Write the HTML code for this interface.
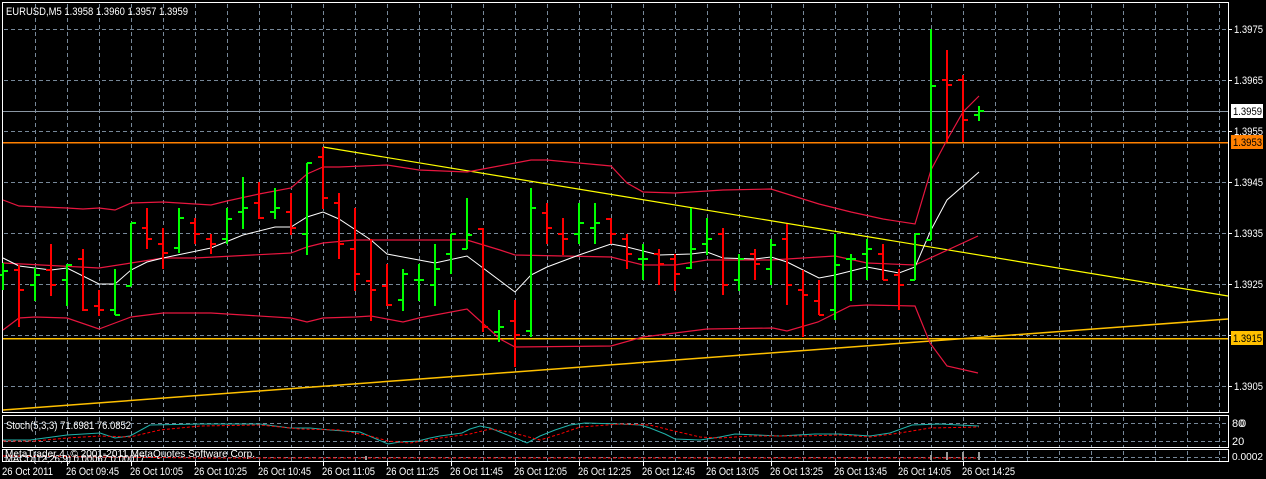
<!DOCTYPE html>
<html><head><meta charset="utf-8"><style>
html,body{margin:0;padding:0;background:#000;}
svg{display:block;font-family:"Liberation Sans",sans-serif;}
</style></head><body>
<svg width="1266" height="479" viewBox="0 0 1266 479" xmlns="http://www.w3.org/2000/svg" shape-rendering="crispEdges">
<rect width="1266" height="479" fill="#000"/>
<g stroke="#778899" stroke-width="1" stroke-dasharray="4,3">
<path d="M35.5 4V412M67.5 4V412M99.5 4V412M131.5 4V412M163.5 4V412M195.5 4V412M227.5 4V412M259.5 4V412M291.5 4V412M323.5 4V412M355.5 4V412M387.5 4V412M419.5 4V412M451.5 4V412M483.5 4V412M515.5 4V412M547.5 4V412M579.5 4V412M611.5 4V412M643.5 4V412M675.5 4V412M707.5 4V412M739.5 4V412M771.5 4V412M803.5 4V412M835.5 4V412M867.5 4V412M899.5 4V412M931.5 4V412M963.5 4V412M995.5 4V412M1027.5 4V412M1059.5 4V412M1091.5 4V412M1123.5 4V412M1155.5 4V412M1187.5 4V412M1219.5 4V412"/>
<path d="M35.5 417V447M67.5 417V447M99.5 417V447M131.5 417V447M163.5 417V447M195.5 417V447M227.5 417V447M259.5 417V447M291.5 417V447M323.5 417V447M355.5 417V447M387.5 417V447M419.5 417V447M451.5 417V447M483.5 417V447M515.5 417V447M547.5 417V447M579.5 417V447M611.5 417V447M643.5 417V447M675.5 417V447M707.5 417V447M739.5 417V447M771.5 417V447M803.5 417V447M835.5 417V447M867.5 417V447M899.5 417V447M931.5 417V447M963.5 417V447M995.5 417V447M1027.5 417V447M1059.5 417V447M1091.5 417V447M1123.5 417V447M1155.5 417V447M1187.5 417V447M1219.5 417V447"/>
<path d="M35.5 451V461M67.5 451V461M99.5 451V461M131.5 451V461M163.5 451V461M195.5 451V461M227.5 451V461M259.5 451V461M291.5 451V461M323.5 451V461M355.5 451V461M387.5 451V461M419.5 451V461M451.5 451V461M483.5 451V461M515.5 451V461M547.5 451V461M579.5 451V461M611.5 451V461M643.5 451V461M675.5 451V461M707.5 451V461M739.5 451V461M771.5 451V461M803.5 451V461M835.5 451V461M867.5 451V461M899.5 451V461M931.5 451V461M963.5 451V461M995.5 451V461M1027.5 451V461M1059.5 451V461M1091.5 451V461M1123.5 451V461M1155.5 451V461M1187.5 451V461M1219.5 451V461"/>
<path d="M4 29.5H1228M4 80.5H1228M4 131.5H1228M4 182.5H1228M4 233.5H1228M4 284.5H1228M4 335.5H1228M4 386.5H1228M4 423.5H1228M4 441.5H1228M4 457.5H1228"/>
</g>
<g stroke="#fff" stroke-width="1" fill="none">
<path d="M2.5 2.5H1228.5V412.5H2.5Z"/>
<path d="M2.5 415.5H1228.5V447.5H2.5Z"/>
<path d="M2.5 449.5H1228.5V461.5H2.5Z"/>
<path d="M67.5 462V466M131.5 462V466M195.5 462V466M259.5 462V466M323.5 462V466M387.5 462V466M451.5 462V466M515.5 462V466M579.5 462V466M643.5 462V466M707.5 462V466M771.5 462V466M835.5 462V466M899.5 462V466M963.5 462V466"/>
<path d="M1228 29.5H1232M1228 80.5H1232M1228 131.5H1232M1228 182.5H1232M1228 233.5H1232M1228 284.5H1232M1228 335.5H1232M1228 386.5H1232"/>
</g>
<path d="M3 111.5H1228" stroke="#8a96a3" stroke-width="1"/>
<path d="M3 142.5H1228" stroke="#ff8000" stroke-width="1.5"/>
<path d="M3 338.5H1228" stroke="#ffc000" stroke-width="1.5"/>
<g shape-rendering="auto" fill="none">
<path d="M323 147L1228 296" stroke="#ffff00" stroke-width="1.2"/>
<path d="M3 410L1228 319" stroke="#ffc000" stroke-width="1.5"/>
<polyline stroke="#e8163f" stroke-width="1.2" points="3,200 19,206 67,208 83,209 99,208 115,210 131,203 163,202 179,203 211,205 227,201 259,194 291,188 307,174 323,167 339,167 387,165 419,170 467,172 515,163 531,160 547,160 611,166 627,183 643,192 675,193 723,190 771,189 819,204 851,212 883,219 915,224 931,170 947,140 963,112 979,96"/>
<polyline stroke="#e8163f" stroke-width="1.2" points="3,263 99,268 131,263 163,258 195,258 291,253 307,247 323,243 355,240 419,240 467,240 500,250 515,255 611,257 643,265 675,265 707,260 771,260 835,256 867,263 915,265 978,236"/>
<polyline stroke="#e8163f" stroke-width="1.2" points="3,330 19,318 35,317 67,318 99,329 115,323 131,317 163,313 211,313 243,315 291,318 307,322 323,318 355,317 371,316 403,322 419,318 467,309 500,339 515,347 611,346 643,337 707,329 773,328 787,331 818,322 850,306 867,305 915,306 930,343 947,366 978,373"/>
<polyline stroke="#fff" stroke-width="1" points="3,258 19,266 51,270 67,268 99,284 115,284 131,270 147,262 163,258 211,248 243,235 275,227 291,227 307,217 323,212 339,219 371,240 387,254 435,263 467,256 515,292 531,275 547,267 579,255 611,244 627,247 659,255 691,254 707,252 723,258 755,259 771,257 787,262 819,278 835,275 867,267 899,273 915,267 931,230 947,200 979,172"/>
</g>
<path stroke="#00ff00" stroke-width="2" fill="none" d="M3 263V290M-2 275H3M3 271H8M35 268V301M30 285H35M35 275H40M67 264V306M62 280H67M67 265H72M115 269V315M110 310H115M115 315H120M131 223V286M126 286H131M131 223H136M179 208V253M174 248H179M179 218H184M227 208V244M222 239H227M227 219H232M243 177V229M238 212H243M243 208H248M275 188V219M270 212H275M275 208H280M307 163V255M302 234H307M307 163H312M403 269V311M398 300H403M403 274H408M419 264V301M414 280H419M419 280H424M435 244V306M430 285H435M435 269H440M451 234V274M446 254H451M451 234H456M467 198V249M462 249H467M467 235H472M499 310V342M494 332H499M499 327H504M531 188V337M526 331H531M531 208H536M579 203V244M574 234H579M579 223H584M595 203V244M590 228H595M595 223H600M643 244V280M638 259H643M643 259H648M691 208V269M686 268H691M691 249H696M707 218V255M702 244H707M707 239H712M739 254V291M734 280H739M739 259H744M771 239V285M766 269H771M771 245H776M835 234V320M830 310H835M835 265H840M851 254V301M846 259H851M851 259H856M867 239V280M862 254H867M867 249H872M915 234V280M910 280H915M915 234H920M931 29V240M926 240H931M931 86H936M979 106V121M974 115H979M979 111H984"/>
<path stroke="#ff0000" stroke-width="2" fill="none" d="M19 265V327M14 270H19M19 290H24M51 244V296M46 270H51M51 285H56M83 249V311M78 259H83M83 310H88M99 290V316M94 306H99M99 310H104M147 208V249M142 228H147M147 239H152M163 228V269M158 244H163M163 253H168M195 218V244M190 223H195M195 234H200M211 234V254M206 239H211M211 244H216M259 182V219M254 203H259M259 218H264M291 193V235M286 212H291M291 228H296M323 147V209M318 157H323M323 198H328M339 193V259M334 203H339M339 244H344M355 208V291M350 249H355M355 274H360M371 239V321M366 281H371M371 290H376M387 264V306M382 286H387M387 305H392M483 228V332M478 229H483M483 327H488M515 300V367M510 321H515M515 335H520M547 203V244M542 213H547M547 228H552M563 218V255M558 234H563M563 239H568M611 218V244M606 219H611M611 234H616M627 234V269M622 239H627M627 254H632M659 249V285M654 254H659M659 264H664M675 254V291M670 259H675M675 274H680M723 228V295M718 234H723M723 285H728M755 249V280M750 254H755M755 264H760M787 224V305M782 239H787M787 285H792M803 270V337M798 290H803M803 295H808M819 280V315M814 301H819M819 315H824M883 244V280M878 254H883M883 280H888M899 269V310M894 275H899M899 285H904M947 50V142M942 80H947M947 85H952M963 75V142M958 80H963M963 120H968"/>
<g shape-rendering="auto" fill="none">
<polyline stroke="#20b2aa" stroke-width="1" points="3,440 30,440 67,435 100,433 115,438 130,436 150,425 200,424 260,424 290,428 310,428 330,430 360,432 388,444 400,442 418,441 430,438 440,436 462,433 470,429 480,426 490,428 505,434 520,440 527,443 540,436 555,430 570,425 585,423 620,424 640,425 650,428 665,434 675,439 700,440 720,437 735,434 780,436 815,434 840,434 870,436 890,433 912,425 940,424 979,426"/>
<polyline stroke="#ff0000" stroke-width="1" stroke-dasharray="3,2" points="3,441 35,441 67,438 100,436 130,437 160,430 200,426 260,425 300,429 340,430 370,436 388,441 410,443 440,438 470,434 490,429 510,432 540,440 560,434 580,427 620,424 650,425 670,430 700,437 720,438 750,436 800,436 840,435 870,437 900,433 930,428 979,427"/>
<path stroke="#ff0000" stroke-width="1" stroke-dasharray="3,2" d="M3 456L200 458H979"/>
</g>
<g fill="#999">
<rect x="45" y="457" width="2" height="3"/><rect x="365" y="456" width="2" height="4"/><rect x="930" y="455" width="2" height="5"/><rect x="946" y="452" width="2" height="8"/><rect x="962" y="452" width="2" height="8"/><rect x="978" y="452" width="2" height="8"/>
</g>
<g fill="#fff" font-size="11" lengthAdjust="spacingAndGlyphs">
<text x="1234" y="33" textLength="29" lengthAdjust="spacingAndGlyphs">1.3975</text>
<text x="1234" y="84" textLength="29" lengthAdjust="spacingAndGlyphs">1.3965</text>
<text x="1234" y="135" textLength="29" lengthAdjust="spacingAndGlyphs">1.3955</text>
<text x="1234" y="186" textLength="29" lengthAdjust="spacingAndGlyphs">1.3945</text>
<text x="1234" y="237" textLength="29" lengthAdjust="spacingAndGlyphs">1.3935</text>
<text x="1234" y="288" textLength="29" lengthAdjust="spacingAndGlyphs">1.3925</text>
<text x="1234" y="390" textLength="29" lengthAdjust="spacingAndGlyphs">1.3905</text>
<text x="1232" y="427">80</text><text x="1240" y="427">0</text>
<text x="1232" y="445">20</text>
<text x="1232" y="460" font-size="10" textLength="31" lengthAdjust="spacingAndGlyphs">0.0002</text>
</g>
<rect x="1231" y="104" width="32" height="14" fill="#fff"/>
<text x="1233" y="115" fill="#000" font-size="11" textLength="29" lengthAdjust="spacingAndGlyphs">1.3959</text>
<rect x="1231" y="135" width="32" height="14" fill="#ff8000"/>
<text x="1233" y="146" fill="#000" font-size="11" textLength="29" lengthAdjust="spacingAndGlyphs">1.3953</text>
<rect x="1231" y="331" width="32" height="14" fill="#ffc000"/>
<text x="1233" y="342" fill="#000" font-size="11" textLength="29" lengthAdjust="spacingAndGlyphs">1.3915</text>
<g fill="#fff" font-size="11">
<text x="6" y="15" textLength="182" lengthAdjust="spacingAndGlyphs">EURUSD,M5  1.3958 1.3960 1.3957 1.3959</text>
<text x="6" y="429" textLength="125" lengthAdjust="spacingAndGlyphs">Stoch(5,3,3) 71.6981 76.0852</text>
<text x="5" y="457" font-size="10.5" textLength="250" lengthAdjust="spacingAndGlyphs">MetaTrader 4, © 2001-2011 MetaQuotes Software Corp.</text>
<text x="5" y="462" font-size="10" textLength="140" lengthAdjust="spacingAndGlyphs">MACD(12,26,9) 0.00067 0.00017</text>
</g>
<g fill="#fff" font-size="11">
<text x="2" y="475" textLength="51" lengthAdjust="spacingAndGlyphs">26 Oct 2011</text>
<text x="66" y="475" textLength="53" lengthAdjust="spacingAndGlyphs">26 Oct 09:45</text>
<text x="130" y="475" textLength="53" lengthAdjust="spacingAndGlyphs">26 Oct 10:05</text>
<text x="194" y="475" textLength="53" lengthAdjust="spacingAndGlyphs">26 Oct 10:25</text>
<text x="258" y="475" textLength="53" lengthAdjust="spacingAndGlyphs">26 Oct 10:45</text>
<text x="322" y="475" textLength="53" lengthAdjust="spacingAndGlyphs">26 Oct 11:05</text>
<text x="386" y="475" textLength="53" lengthAdjust="spacingAndGlyphs">26 Oct 11:25</text>
<text x="450" y="475" textLength="53" lengthAdjust="spacingAndGlyphs">26 Oct 11:45</text>
<text x="514" y="475" textLength="53" lengthAdjust="spacingAndGlyphs">26 Oct 12:05</text>
<text x="578" y="475" textLength="53" lengthAdjust="spacingAndGlyphs">26 Oct 12:25</text>
<text x="642" y="475" textLength="53" lengthAdjust="spacingAndGlyphs">26 Oct 12:45</text>
<text x="706" y="475" textLength="53" lengthAdjust="spacingAndGlyphs">26 Oct 13:05</text>
<text x="770" y="475" textLength="53" lengthAdjust="spacingAndGlyphs">26 Oct 13:25</text>
<text x="834" y="475" textLength="53" lengthAdjust="spacingAndGlyphs">26 Oct 13:45</text>
<text x="898" y="475" textLength="53" lengthAdjust="spacingAndGlyphs">26 Oct 14:05</text>
<text x="962" y="475" textLength="53" lengthAdjust="spacingAndGlyphs">26 Oct 14:25</text>
</g>
</svg>
</body></html>
